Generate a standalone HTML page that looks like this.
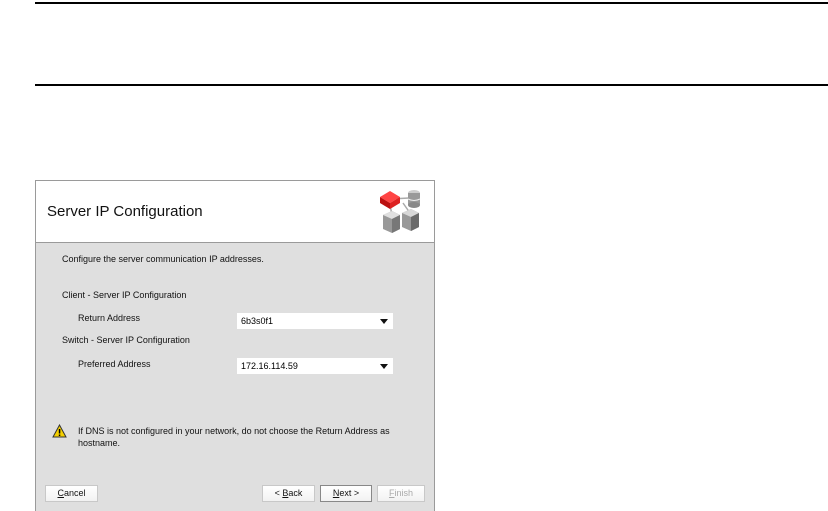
<!DOCTYPE html>
<html><head><style>
body{margin:0;width:828px;height:511px;background:#fff;position:relative;overflow:hidden;font-family:"Liberation Sans",Arial,sans-serif}
.a{position:absolute}
.t{position:absolute;font-size:9px;color:#111;white-space:nowrap}
.sel{position:absolute;background:#fff;height:16px;font-size:9px;line-height:17px;padding-left:4px;box-sizing:border-box}
.sel:after{content:"";position:absolute;right:5px;top:6px;border-left:4px solid transparent;border-right:4px solid transparent;border-top:5px solid #111}
.btn{position:absolute;height:17px;background:linear-gradient(#fff,#f2f2f2);border:1px solid #c8c8c8;box-sizing:border-box;font-size:9px;text-align:center;line-height:15px;color:#111}
</style></head><body>
<div class="a" style="left:35px;top:2px;width:793px;height:2px;background:#000"></div>
<div class="a" style="left:35px;top:84px;width:793px;height:2px;background:#000"></div>
<div class="a" style="left:35px;top:180px;width:400px;height:331px;background:#dfdfdf;border:1px solid #9a9a9a;border-bottom:none;box-sizing:border-box"></div>
<div class="a" style="left:36px;top:181px;width:398px;height:61px;background:#fff;border-bottom:1px solid #9a9a9a"></div>
<div class="a" style="left:47px;top:203px;font-size:15px;color:#111">Server IP Configuration</div>
<svg class="a" style="left:379px;top:187px" width="44" height="48" viewBox="0 0 44 48">
<path d="M12 12 L30 11 M11 18 L13 28 M24 16 L31 26" stroke="#aaa" stroke-width="1.5"/>
<ellipse cx="35" cy="6" rx="6" ry="3" fill="#ccc"/><rect x="29" y="6" width="12" height="12" fill="#999"/><path d="M29 12 Q35 15 41 12" stroke="#eee" fill="none"/><ellipse cx="35" cy="18" rx="6" ry="3" fill="#888"/>
<path d="M1 10 L11 4 L21 10 L11 16Z" fill="#f44"/><path d="M1 10 L11 16 L11 22 L1 16Z" fill="#b11"/><path d="M21 10 L11 16 L11 22 L21 16Z" fill="#d22"/>
<path d="M4 28 L13 24 L21 28 L21 42 L13 46 L4 42Z" fill="#999"/><path d="M4 28 L13 24 L21 28 L13 32Z" fill="#e0e0e0"/><path d="M13 32 L21 28 L21 42 L13 46Z" fill="#777"/>
<path d="M23 26 L32 22 L40 26 L40 40 L32 44 L23 40Z" fill="#999"/><path d="M23 26 L32 22 L40 26 L32 30Z" fill="#d8d8d8"/><path d="M32 30 L40 26 L40 40 L32 44Z" fill="#6a6a6a"/>
</svg>
<div class="t" style="left:62px;top:254px">Configure the server communication IP addresses.</div>
<div class="t" style="left:62px;top:290px">Client - Server IP Configuration</div>
<div class="t" style="left:78px;top:313px">Return Address</div>
<div class="sel" style="left:237px;top:313px;width:156px">6b3s0f1</div>
<div class="t" style="left:62px;top:335px">Switch - Server IP Configuration</div>
<div class="t" style="left:78px;top:359px">Preferred Address</div>
<div class="sel" style="left:237px;top:358px;width:156px">172.16.114.59</div>
<svg class="a" style="left:52px;top:424px" width="15" height="14" viewBox="0 0 15 14"><path d="M7.5 1 L14 13 L1 13Z" fill="#f5d000" stroke="#333" stroke-width="1"/><rect x="6.8" y="5" width="1.5" height="4.5" fill="#000"/><rect x="6.8" y="10.5" width="1.5" height="1.5" fill="#000"/></svg>
<div class="t" style="left:78px;top:426px">If DNS is not configured in your network, do not choose the Return Address as</div>
<div class="t" style="left:78px;top:438px">hostname.</div>
<div class="btn" style="left:45px;top:485px;width:53px"><u>C</u>ancel</div>
<div class="btn" style="left:262px;top:485px;width:53px">&lt; <u>B</u>ack</div>
<div class="btn" style="left:320px;top:485px;width:52px;border-color:#888"><u>N</u>ext &gt;</div>
<div class="btn" style="left:377px;top:485px;width:48px;color:#aaa"><u>F</u>inish</div>
</body></html>
